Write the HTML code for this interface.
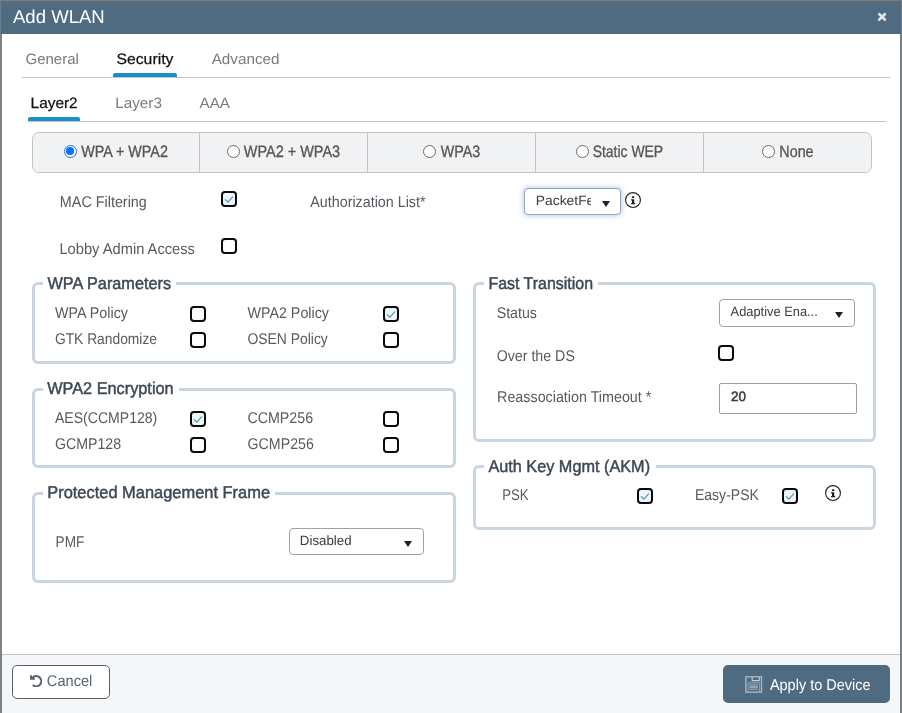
<!DOCTYPE html>
<html lang="en">
<head>
<meta charset="utf-8">
<title>Add WLAN</title>
<style>
*{box-sizing:border-box;margin:0;padding:0}
html,body{width:902px;height:713px;overflow:hidden;background:#fff}
body{font-family:"Liberation Sans",sans-serif;position:relative}
#wrap{position:absolute;left:0;top:0;width:902px;height:713px;overflow:hidden;will-change:transform;background:#fff;text-rendering:geometricPrecision}
.a,.t,.cb,.fs,.lg,.rd,.sel,.arr,.box{position:absolute}
.t{line-height:20px;white-space:nowrap;transform-origin:0 0}
#frame{position:absolute;left:0;top:0;width:902px;height:713px;border-left:2px solid #7a828b;border-right:2px solid #7b7e81}
#hdr{position:absolute;left:0;top:0;width:902px;height:34px;background:linear-gradient(#596b78 0,#596b78 3px,#4f6b81 5px);border-top:1px solid #6d7e8b;border-left:1px solid #6d7e8b;border-right:1px solid #6d7e8b}
#foot{position:absolute;left:2px;top:654px;width:898px;height:59px;background:#f5f6f7;border-top:1px solid #c4c4c4}
.ln{position:absolute;height:1px;background:#c4c4c4}
.ul{position:absolute;height:4px;background:#1b8fc9;border-radius:2px 2px 0 0}
#rb{position:absolute;left:32px;top:132px;width:840px;height:41px;background:#f1f2f4;border:1px solid #c3c3c3;border-radius:7px}
.dv{position:absolute;top:132px;width:1px;height:41px;background:#c3c3c3}
.rd{width:13px;height:13px;border-radius:50%;border:1px solid #6a6a6a;background:#fff}
.rd.on{border:1.5px solid #1f6fe5}
.rd.on:after{content:"";position:absolute;left:1.25px;top:1.25px;width:7.5px;height:7.5px;border-radius:50%;background:#0d6efd}
.cb{width:16px;height:16px;border:2px solid #0a0a0a;border-radius:4px;background:#fff}
.cb svg{position:absolute;left:-2px;top:-2px}
.cb.on{background:#e9f6fb}
.fs{border:3px solid #c9d5e1;border-radius:6px;background:transparent}
.lg{height:7px;background:#fff}
.sel{border:1px solid #9aa3aa;border-radius:4px;background:#fff}
.sel.focus{border-color:#8ea6bf;box-shadow:0 0 5px 1px rgba(120,170,220,.5)}
.arr{width:0;height:0;border-left:4.2px solid transparent;border-right:4.2px solid transparent;border-top:6px solid #222}
.box{border:1px solid #98a1a9;background:#fff;border-radius:2px}
#cancel{position:absolute;left:12px;top:665px;width:98px;height:34px;border:1px solid #56606a;border-radius:5px;background:#fff}
#apply{position:absolute;left:723px;top:665px;width:167px;height:38px;border-radius:5px;background:#4f6b82}
</style>
</head>
<body>
<div id="wrap">
<div id="frame"></div>
<div id="hdr"></div>
<span class="t" style="left:13px;top:7px;font-size:18.5px;color:#ffffff;transform:translateX(0.00px) scaleX(1.0022);">Add WLAN</span>
<span class="t" style="left:877px;top:8px;font-size:15.5px;color:#e4eaef;font-weight:700;transform:translateX(0.60px) scaleX(1.0000);-webkit-text-stroke:0.8px #e4eaef;">×</span>
<div class="ln" style="left:22px;top:77px;width:868px"></div>
<span class="t" style="left:25px;top:50px;font-size:15px;color:#797a7c;transform:translateX(0.50px) scaleX(1.0000);">General</span>
<span class="t" style="left:116px;top:50px;font-size:15px;color:#111;transform:translateX(0.45px) scaleX(1.0509);-webkit-text-stroke:0.25px #111;">Security</span>
<span class="t" style="left:211px;top:50px;font-size:15px;color:#797a7c;transform:translateX(0.70px) scaleX(1.0152);">Advanced</span>
<div class="ul" style="left:113px;top:73px;width:64px"></div>
<div class="ln" style="left:28px;top:121px;width:858px"></div>
<span class="t" style="left:30px;top:94px;font-size:15px;color:#111;transform:translateX(0.57px) scaleX(1.0273);-webkit-text-stroke:0.25px #111;">Layer2</span>
<span class="t" style="left:115px;top:94px;font-size:15px;color:#797a7c;transform:translateX(0.28px) scaleX(1.0159);">Layer3</span>
<span class="t" style="left:199px;top:94px;font-size:15px;color:#797a7c;transform:translateX(0.50px) scaleX(1.0133);">AAA</span>
<div class="ul" style="left:28px;top:117px;width:52px"></div>
<div id="rb"></div>
<div class="dv" style="left:199.0px"></div>
<div class="dv" style="left:367.0px"></div>
<div class="dv" style="left:535.0px"></div>
<div class="dv" style="left:703.0px"></div>
<div class="rd on" style="left:64.0px;top:145.0px"></div>
<span class="t" style="left:81px;top:142px;font-size:16.5px;color:#555;transform:translateX(0.20px) scaleX(0.8687);-webkit-text-stroke:0.3px #555;">WPA + WPA2</span>
<div class="rd" style="left:227.0px;top:145.0px"></div>
<span class="t" style="left:243px;top:142px;font-size:16.5px;color:#555;transform:translateX(0.80px) scaleX(0.8761);-webkit-text-stroke:0.3px #555;">WPA2 + WPA3</span>
<div class="rd" style="left:423.0px;top:145.0px"></div>
<span class="t" style="left:440px;top:142px;font-size:16.5px;color:#555;transform:translateX(0.70px) scaleX(0.8667);-webkit-text-stroke:0.3px #555;">WPA3</span>
<div class="rd" style="left:575.5px;top:145.0px"></div>
<span class="t" style="left:592px;top:142px;font-size:16.5px;color:#555;transform:translateX(0.65px) scaleX(0.8451);-webkit-text-stroke:0.3px #555;">Static WEP</span>
<div class="rd" style="left:761.5px;top:145.0px"></div>
<span class="t" style="left:779px;top:142px;font-size:16.5px;color:#555;transform:translateX(0.33px) scaleX(0.8684);-webkit-text-stroke:0.3px #555;">None</span>
<span class="t" style="left:59px;top:193px;font-size:15.5px;color:#555b61;transform:translateX(0.87px) scaleX(0.9261);">MAC Filtering</span>
<div class="cb on" style="left:221px;top:191px"><svg viewBox="0 0 16 16" width="16" height="16"><path d="M4.3 8.6 L6.9 11.2 L11.6 5.8" fill="none" stroke="#5a8c9c" stroke-width="1.05" stroke-linecap="round" stroke-linejoin="round"/></svg></div>
<span class="t" style="left:310px;top:193px;font-size:15.5px;color:#555b61;transform:translateX(0.30px) scaleX(0.9224);">Authorization List*</span>
<div class="sel focus" style="left:524px;top:188px;width:97px;height:27px"></div>
<div class="a" style="left:525px;top:189px;width:65.5px;height:25px;overflow:hidden"><span class="t" style="left:10px;top:2px;font-size:13.5px;color:#3b3b3b;transform:translateX(0.77px) scaleX(1.0268);">PacketFe</span></div>
<div class="arr" style="left:602px;top:200.8px"></div>
<svg class="a" style="left:624px;top:191px" width="18" height="18" viewBox="0 0 18 18"><circle cx="9" cy="9" r="7.45" fill="#fff" stroke="#2a2a2a" stroke-width="1.15"/><rect x="7.9" y="5.3" width="2.3" height="1.8" fill="#1a1a1a"/><path d="M7.1 8.3h3.1v3.8h0.9v1.1H7.1v-1.1h0.9v-2.7h-0.9z" fill="#1a1a1a"/></svg>
<span class="t" style="left:59px;top:240px;font-size:15.5px;color:#555b61;transform:translateX(0.45px) scaleX(0.9472);">Lobby Admin Access</span>
<div class="cb" style="left:221px;top:238px"></div>
<div class="fs" style="left:32px;top:282px;width:424px;height:82px"></div>
<div class="lg" style="left:43px;top:280px;width:133px"></div>
<span class="t" style="left:47px;top:274px;font-size:17px;color:#3d4854;transform:translateX(0.50px) scaleX(0.9574);-webkit-text-stroke:0.45px #3d4854;">WPA Parameters</span>
<span class="t" style="left:55px;top:304px;font-size:15.5px;color:#555b61;transform:translateX(0.00px) scaleX(0.9241);">WPA Policy</span>
<div class="cb" style="left:190px;top:306px"></div>
<span class="t" style="left:247px;top:304px;font-size:15.5px;color:#555b61;transform:translateX(0.40px) scaleX(0.9227);">WPA2 Policy</span>
<div class="cb on" style="left:383px;top:306px"><svg viewBox="0 0 16 16" width="16" height="16"><path d="M4.3 8.6 L6.9 11.2 L11.6 5.8" fill="none" stroke="#5a8c9c" stroke-width="1.05" stroke-linecap="round" stroke-linejoin="round"/></svg></div>
<span class="t" style="left:54px;top:330px;font-size:15.5px;color:#555b61;transform:translateX(0.91px) scaleX(0.8912);">GTK Randomize</span>
<div class="cb" style="left:190px;top:332px"></div>
<span class="t" style="left:247px;top:330px;font-size:15.5px;color:#555b61;transform:translateX(0.40px) scaleX(0.8977);">OSEN Policy</span>
<div class="cb" style="left:383px;top:332px"></div>
<div class="fs" style="left:32px;top:388px;width:424px;height:80px"></div>
<div class="lg" style="left:43px;top:386px;width:136px"></div>
<span class="t" style="left:47px;top:379px;font-size:17px;color:#3d4854;transform:translateX(0.20px) scaleX(0.9580);-webkit-text-stroke:0.45px #3d4854;">WPA2 Encryption</span>
<span class="t" style="left:55px;top:409px;font-size:15.5px;color:#555b61;transform:translateX(0.00px) scaleX(0.9062);">AES(CCMP128)</span>
<div class="cb on" style="left:190px;top:411px"><svg viewBox="0 0 16 16" width="16" height="16"><path d="M4.3 8.6 L6.9 11.2 L11.6 5.8" fill="none" stroke="#5a8c9c" stroke-width="1.05" stroke-linecap="round" stroke-linejoin="round"/></svg></div>
<span class="t" style="left:247px;top:409px;font-size:15.5px;color:#555b61;transform:translateX(0.38px) scaleX(0.9200);">CCMP256</span>
<div class="cb" style="left:383px;top:411px"></div>
<span class="t" style="left:54px;top:435px;font-size:15.5px;color:#555b61;transform:translateX(0.88px) scaleX(0.9155);">GCMP128</span>
<div class="cb" style="left:190px;top:437px"></div>
<span class="t" style="left:247px;top:435px;font-size:15.5px;color:#555b61;transform:translateX(0.58px) scaleX(0.9155);">GCMP256</span>
<div class="cb" style="left:383px;top:437px"></div>
<div class="fs" style="left:32px;top:492px;width:424px;height:91px"></div>
<div class="lg" style="left:43px;top:490px;width:232px"></div>
<span class="t" style="left:47px;top:483px;font-size:17px;color:#3d4854;transform:translateX(0.23px) scaleX(0.9664);-webkit-text-stroke:0.45px #3d4854;">Protected Management Frame</span>
<span class="t" style="left:55px;top:533px;font-size:15.5px;color:#555b61;transform:translateX(0.62px) scaleX(0.8774);">PMF</span>
<div class="sel" style="left:289px;top:528px;width:135px;height:27px"></div>
<span class="t" style="left:299px;top:531px;font-size:13.5px;color:#3b3b3b;transform:translateX(0.81px) scaleX(0.9863);">Disabled</span>
<div class="arr" style="left:404px;top:541.3px"></div>
<div class="fs" style="left:473px;top:282px;width:403px;height:160px"></div>
<div class="lg" style="left:484px;top:280px;width:114px"></div>
<span class="t" style="left:488px;top:274px;font-size:17px;color:#3d4854;transform:translateX(0.46px) scaleX(0.9382);-webkit-text-stroke:0.45px #3d4854;">Fast Transition</span>
<span class="t" style="left:496px;top:304px;font-size:15.5px;color:#555b61;transform:translateX(0.69px) scaleX(0.9140);">Status</span>
<div class="sel" style="left:719px;top:299px;width:136px;height:28px"></div>
<span class="t" style="left:730px;top:302px;font-size:13.5px;color:#3b3b3b;transform:translateX(0.60px) scaleX(0.9516);">Adaptive Ena...</span>
<div class="arr" style="left:834.7px;top:311.8px"></div>
<span class="t" style="left:496px;top:347px;font-size:15.5px;color:#555b61;transform:translateX(0.68px) scaleX(0.9167);">Over the DS</span>
<div class="cb" style="left:718px;top:345px"></div>
<span class="t" style="left:497px;top:388px;font-size:15.5px;color:#555b61;transform:translateX(0.08px) scaleX(0.9229);">Reassociation Timeout *</span>
<div class="box" style="left:719px;top:383px;width:138px;height:31px"></div>
<span class="t" style="left:731px;top:387px;font-size:13.5px;color:#3a3a3a;transform:translateX(0.00px) scaleX(1.0000);-webkit-text-stroke:0.5px #3a3a3a;">20</span>
<div class="fs" style="left:473px;top:465px;width:403px;height:65px"></div>
<div class="lg" style="left:484px;top:463px;width:172px"></div>
<span class="t" style="left:488px;top:457px;font-size:17px;color:#3d4854;transform:translateX(0.40px) scaleX(0.9560);-webkit-text-stroke:0.45px #3d4854;">Auth Key Mgmt (AKM)</span>
<span class="t" style="left:502px;top:486px;font-size:15.5px;color:#555b61;transform:translateX(0.15px) scaleX(0.8533);">PSK</span>
<div class="cb on" style="left:637px;top:488px"><svg viewBox="0 0 16 16" width="16" height="16"><path d="M4.3 8.6 L6.9 11.2 L11.6 5.8" fill="none" stroke="#5a8c9c" stroke-width="1.05" stroke-linecap="round" stroke-linejoin="round"/></svg></div>
<span class="t" style="left:694px;top:486px;font-size:15.5px;color:#555b61;transform:translateX(0.89px) scaleX(0.9072);">Easy-PSK</span>
<div class="cb on" style="left:782px;top:488px"><svg viewBox="0 0 16 16" width="16" height="16"><path d="M4.3 8.6 L6.9 11.2 L11.6 5.8" fill="none" stroke="#5a8c9c" stroke-width="1.05" stroke-linecap="round" stroke-linejoin="round"/></svg></div>
<svg class="a" style="left:823.5px;top:484px" width="18" height="18" viewBox="0 0 18 18"><circle cx="9" cy="9" r="7.45" fill="#fff" stroke="#2a2a2a" stroke-width="1.15"/><rect x="7.9" y="5.3" width="2.3" height="1.8" fill="#1a1a1a"/><path d="M7.1 8.3h3.1v3.8h0.9v1.1H7.1v-1.1h0.9v-2.7h-0.9z" fill="#1a1a1a"/></svg>
<div id="foot"></div>
<div id="cancel"></div>
<svg class="a" style="left:29.9px;top:675.3px" width="12.5" height="12.2" viewBox="0 0 512 500"><path d="M104 112 A208 208 0 1 1 116 410" fill="none" stroke="#53606c" stroke-width="86"/><path d="M4 14H70L110 120H196V196H4Z" fill="#53606c"/></svg>
<span class="t" style="left:46px;top:672px;font-size:15.5px;color:#56636f;transform:translateX(0.86px) scaleX(0.9413);">Cancel</span>
<div id="apply"></div>
<svg class="a" style="left:745px;top:676px" width="18" height="18" viewBox="0 0 18 18"><rect x="0.9" y="0.8" width="15.6" height="15.4" fill="none" stroke="#a5b6c4" stroke-width="1.4"/><path d="M7.2 1v3.6h7V1" fill="none" stroke="#c3cfd9" stroke-width="1.1"/><path d="M3.2 16V6.8h11.4V16" fill="none" stroke="#93a6b6" stroke-width="1"/><path d="M4.6 8.9h8.2M4.6 13.2h8.2" stroke="#b4c2ce" stroke-width="0.9"/><path d="M4.6 11h8.2" stroke="#dde5eb" stroke-width="1"/></svg>
<span class="t" style="left:769px;top:676px;font-size:15.5px;color:#ffffff;transform:translateX(0.90px) scaleX(0.9346);">Apply to Device</span>
</div>
</body>
</html>
